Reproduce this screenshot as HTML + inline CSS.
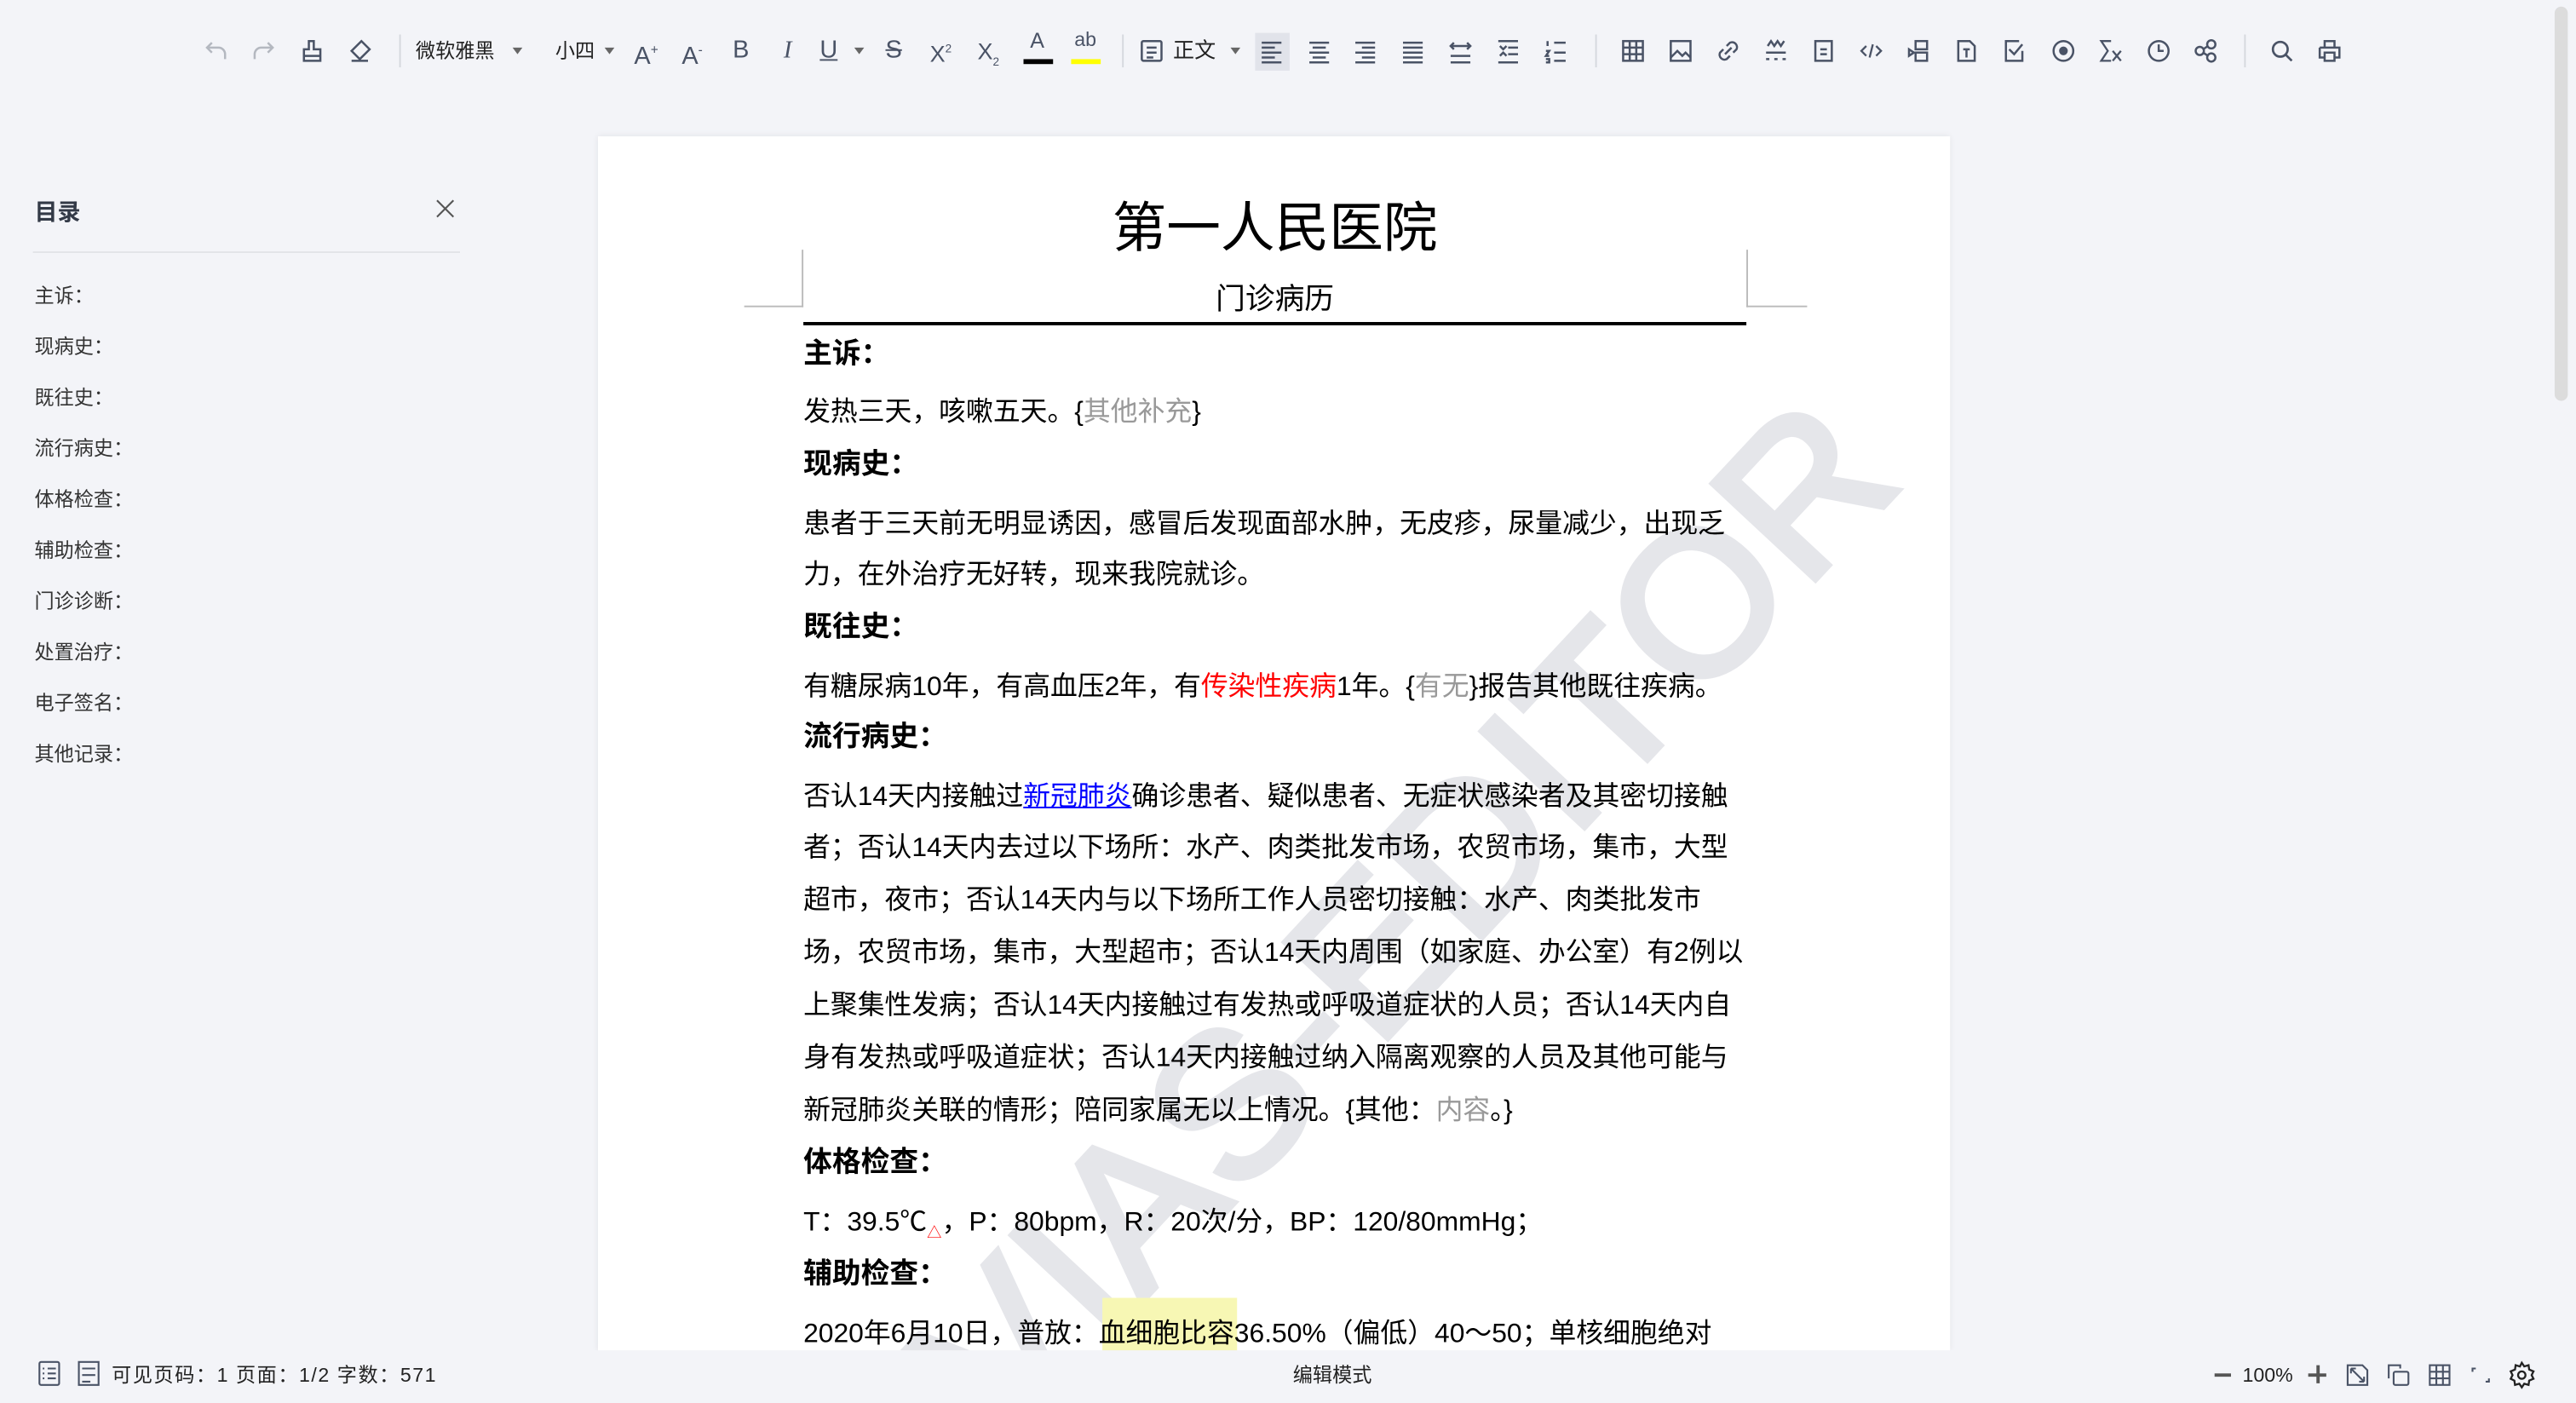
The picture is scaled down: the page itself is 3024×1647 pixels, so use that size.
<!DOCTYPE html>
<html><head><meta charset="utf-8">
<style>
html,body{margin:0;padding:0;width:3024px;height:1646px;overflow:hidden;background:#f3f4f8;}
#w{position:absolute;left:0;top:0;width:1568px;height:854px;transform:scale(1.928571);transform-origin:0 0;font-family:"Liberation Sans","Noto Sans CJK SC",sans-serif;color:#000;}
.a{position:absolute;white-space:nowrap;}
.ic{position:absolute;top:22px;width:18px;height:18px;}
.ic svg{width:18px;height:18px;display:block}
.sep{position:absolute;top:21px;width:1px;height:20px;background:#d5d8de;}
.tb{position:absolute;top:22px;font-size:12px;line-height:18px;color:#222;}
.dd{position:absolute;top:29px;width:0;height:0;border-left:3px solid transparent;border-right:3px solid transparent;border-top:4px solid #666;}
.toc{position:absolute;left:21px;font-size:12px;color:#333;line-height:16px;}
.p{position:absolute;left:489px;font-size:16.5px;line-height:24px;white-space:nowrap;}
.h{position:absolute;left:489px;font-size:17.5px;font-weight:bold;line-height:24px;white-space:nowrap;}
.g{color:#999}
</style></head><body><div id="w">
<div class="a" style="left:1555px;top:4px;width:8px;height:240px;border-radius:4px;background:#dcdcdc"></div>
<!-- toolbar -->
<div class="ic" style="left:123px"><svg viewBox="0 0 18 18" fill="none" stroke="#b4b8c0" stroke-width="1.3"><path d="M6 4L3 7l3 3M3 7h7a4 4 0 014 4v3"/></svg></div>
<div class="ic" style="left:151px"><svg viewBox="0 0 18 18" fill="none" stroke="#b4b8c0" stroke-width="1.3"><path d="M12 4l3 3-3 3M15 7H8a4 4 0 00-4 4v3"/></svg></div>
<div class="ic" style="left:181px"><svg viewBox="0 0 18 18" fill="none" stroke="#4a5366" stroke-width="1.3"><path d="M7 3v5H4v7h10V8H10V3zM4 12h10"/></svg></div>
<div class="ic" style="left:210px"><svg viewBox="0 0 18 18" fill="none" stroke="#4a5366" stroke-width="1.3"><path d="M10 3l5 5-6 6-5-5zM4 15h10"/></svg></div>
<div class="sep" style="left:243px"></div>
<div class="tb" style="left:253px">微软雅黑</div><div class="dd" style="left:312px"></div>
<div class="tb" style="left:338px">小四</div><div class="dd" style="left:368px"></div>
<div class="tb" style="left:386px;font-size:15px;color:#4a5366">A<sup style="font-size:8px">+</sup></div>
<div class="tb" style="left:415px;font-size:15px;color:#4a5366">A<sup style="font-size:8px">-</sup></div>
<div class="tb" style="left:446px;font-size:15px;color:#4a5366">B</div>
<div class="tb" style="left:477px;font-size:15px;color:#4a5366;font-style:italic;font-family:'Liberation Serif'">I</div>
<div class="tb" style="left:499px;font-size:15px;color:#4a5366;text-decoration:underline">U</div><div class="dd" style="left:520px"></div>
<div class="tb" style="left:539px;font-size:15px;color:#4a5366;text-decoration:line-through">S</div>
<div class="tb" style="left:566px;font-size:14px;color:#4a5366">X<sup style="font-size:7px">2</sup></div>
<div class="tb" style="left:595px;font-size:14px;color:#4a5366">X<sub style="font-size:7px">2</sub></div>
<div class="tb" style="left:627px;top:16px;font-size:13px;color:#4a5366">A</div><div class="a" style="left:623px;top:36px;width:18px;height:3px;background:#000"></div>
<div class="tb" style="left:654px;top:15px;font-size:12px;color:#4a5366">ab</div><div class="a" style="left:652px;top:36px;width:18px;height:3px;background:#ff0"></div>
<div class="sep" style="left:683px"></div>
<div class="ic" style="left:692px"><svg viewBox="0 0 18 18" fill="none" stroke="#4a5366" stroke-width="1.3"><rect x="3" y="3" width="12" height="12" rx="1"/><path d="M6 7h6M6 10h6M6 13h4"/></svg></div>
<div class="tb" style="left:714px;font-size:13px">正文</div><div class="dd" style="left:749px"></div>
<div class="a" style="left:764px;top:20px;width:21px;height:23px;background:#e1e3ea"></div>
<div class="ic" style="left:765px"><svg viewBox="0 0 18 18" stroke="#4a5366" stroke-width="1.3"><path d="M3 4h12M3 7h8M3 10h12M3 13h8M3 16h12"/></svg></div>
<div class="ic" style="left:794px"><svg viewBox="0 0 18 18" stroke="#4a5366" stroke-width="1.3"><path d="M3 4h12M5 7h8M3 10h12M5 13h8M3 16h12"/></svg></div>
<div class="ic" style="left:822px"><svg viewBox="0 0 18 18" stroke="#4a5366" stroke-width="1.3"><path d="M3 4h12M7 7h8M3 10h12M7 13h8M3 16h12"/></svg></div>
<div class="ic" style="left:851px"><svg viewBox="0 0 18 18" stroke="#4a5366" stroke-width="1.3"><path d="M3 4h12M3 7h12M3 10h12M3 13h12M3 16h12"/></svg></div>
<div class="ic" style="left:880px"><svg viewBox="0 0 18 18" fill="none" stroke="#4a5366" stroke-width="1.3"><path d="M3 6h12M5 4L3 6l2 2M13 4l2 2-2 2M3 12h12M3 16h12"/></svg></div>
<div class="ic" style="left:909px"><svg viewBox="0 0 18 18" fill="none" stroke="#4a5366" stroke-width="1.3"><path d="M3 3h12M9 7h6M9 11h6M3 16h12M4 6l2 2 2-2M4 12l2-2 2 2"/></svg></div>
<div class="ic" style="left:938px"><svg viewBox="0 0 18 18" fill="none" stroke="#4a5366" stroke-width="1.3"><path d="M8 4h7M8 10h7M8 15h7M4 3v3M3 9h2l-2 3h2M3 14h2v2H3"/></svg></div>
<div class="sep" style="left:971px"></div>
<div class="ic" style="left:985px"><svg viewBox="0 0 18 18" fill="none" stroke="#4a5366" stroke-width="1.3"><rect x="3" y="3" width="12" height="12"/><path d="M3 7h12M3 11h12M7 3v12M11 3v12"/></svg></div>
<div class="ic" style="left:1014px"><svg viewBox="0 0 18 18" fill="none" stroke="#4a5366" stroke-width="1.3"><rect x="3" y="3" width="12" height="12"/><path d="M3 13l4-4 3 3 2-2 3 3"/></svg></div>
<div class="ic" style="left:1043px"><svg viewBox="0 0 18 18" fill="none" stroke="#4a5366" stroke-width="1.3"><path d="M8 6l2-2a3 3 0 014 4l-2 2M10 12l-2 2a3 3 0 01-4-4l2-2M7 11l4-4"/></svg></div>
<div class="ic" style="left:1072px"><svg viewBox="0 0 18 18" fill="none" stroke="#4a5366" stroke-width="1.3"><path d="M4 6l2-3 2 3 2-3 2 3 2-3M3 10h12M3 14h2M8 14h2M13 14h2"/></svg></div>
<div class="ic" style="left:1101px"><svg viewBox="0 0 18 18" fill="none" stroke="#4a5366" stroke-width="1.3"><rect x="4" y="3" width="10" height="12"/><path d="M7 8h4M7 11h4"/></svg></div>
<div class="ic" style="left:1130px"><svg viewBox="0 0 18 18" fill="none" stroke="#4a5366" stroke-width="1.2"><path d="M6 6L3 9l3 3M12 6l3 3-3 3M10 5l-2 8"/></svg></div>
<div class="ic" style="left:1159px"><svg viewBox="0 0 18 18" fill="none" stroke="#4a5366" stroke-width="1.3"><rect x="7" y="3" width="7" height="5"/><rect x="7" y="10" width="7" height="5"/><path d="M3 8l3 2-3 2z"/></svg></div>
<div class="ic" style="left:1188px"><svg viewBox="0 0 18 18" fill="none" stroke="#4a5366" stroke-width="1.3"><path d="M4 3h7l3 3v9H4zM7 8h4M9 8v5"/></svg></div>
<div class="ic" style="left:1217px"><svg viewBox="0 0 18 18" fill="none" stroke="#4a5366" stroke-width="1.3"><path d="M14 9v6H4V3h8M6 8l3 3 5-6"/></svg></div>
<div class="ic" style="left:1247px"><svg viewBox="0 0 18 18" fill="none" stroke="#4a5366" stroke-width="1.3"><circle cx="9" cy="9" r="6"/><circle cx="9" cy="9" r="2" fill="#4a5366"/></svg></div>
<div class="ic" style="left:1276px"><svg viewBox="0 0 18 18" fill="none" stroke="#4a5366" stroke-width="1.2"><path d="M9 3H3l4 6-4 6h6M10 9l5 6M15 9l-5 6"/></svg></div>
<div class="ic" style="left:1305px"><svg viewBox="0 0 18 18" fill="none" stroke="#4a5366" stroke-width="1.3"><circle cx="9" cy="9" r="6"/><path d="M9 5v4h3"/></svg></div>
<div class="ic" style="left:1334px"><svg viewBox="0 0 18 18" fill="none" stroke="#4a5366" stroke-width="1.3"><circle cx="12" cy="5" r="2.5"/><circle cx="5" cy="9" r="2.5"/><circle cx="12" cy="13" r="2.5"/><path d="M7 8l3-2M7 10l3 2"/></svg></div>
<div class="sep" style="left:1366px"></div>
<div class="ic" style="left:1380px"><svg viewBox="0 0 18 18" fill="none" stroke="#4a5366" stroke-width="1.4"><circle cx="8" cy="8" r="4.5"/><path d="M11 11l4 4"/></svg></div>
<div class="ic" style="left:1409px"><svg viewBox="0 0 18 18" fill="none" stroke="#4a5366" stroke-width="1.3"><path d="M6 7V3h6v4M3 7h12v6h-3M6 13H3V7M6 10h6v5H6z"/></svg></div>
<!-- sidebar -->
<div class="a" style="left:21px;top:119px;font-size:14px;font-weight:bold;color:#333a47">目录</div>
<div class="a" style="left:265px;top:120px"><svg width="12" height="12" viewBox="0 0 12 12" stroke="#555" stroke-width="1.1"><path d="M1 1l10 10M11 1L1 11"/></svg></div>
<div class="a" style="left:20px;top:153px;width:260px;height:1px;background:#e2e4e8"></div>
<div class="toc" style="top:172px">主诉：</div>
<div class="toc" style="top:203px">现病史：</div>
<div class="toc" style="top:234px">既往史：</div>
<div class="toc" style="top:265px">流行病史：</div>
<div class="toc" style="top:296px">体格检查：</div>
<div class="toc" style="top:327px">辅助检查：</div>
<div class="toc" style="top:358px">门诊诊断：</div>
<div class="toc" style="top:389px">处置治疗：</div>
<div class="toc" style="top:420px">电子签名：</div>
<div class="toc" style="top:451px">其他记录：</div>
<!-- page -->
<div class="a" style="left:364px;top:83px;width:823px;height:739px;background:#fff;box-shadow:0 0 4px rgba(0,0,0,.08);overflow:hidden">
  <div class="a" style="left:492px;top:475px;width:0;height:0">
    <div class="a" style="left:0;top:0;transform:translate(-50%,-50%) rotate(-47deg);font-size:124px;line-height:124px;color:#e5e6ea;font-family:'Liberation Sans',sans-serif;letter-spacing:1px;-webkit-text-stroke:4px #e5e6ea">VIAS-EDITOR</div>
  </div>
</div>
<div class="a" style="left:488px;top:152px;width:1px;height:35px;background:#bbb"></div>
<div class="a" style="left:453px;top:186px;width:36px;height:1px;background:#bbb"></div>
<div class="a" style="left:1063px;top:152px;width:1px;height:35px;background:#bbb"></div>
<div class="a" style="left:1063px;top:186px;width:37px;height:1px;background:#bbb"></div>
<div class="a" style="left:576px;top:117px;width:400px;text-align:center;font-size:33px;line-height:44px">第一人民医院</div>
<div class="a" style="left:676px;top:171px;width:200px;text-align:center;font-size:18px;line-height:22px">门诊病历</div>
<div class="a" style="left:489px;top:196px;width:574px;height:1.5px;background:#000"></div>
<div class="h" style="top:203px">主诉：</div>
<div class="p" style="top:239px">发热三天，咳嗽五天。{<span class="g">其他补充</span>}</div>
<div class="h" style="top:270px">现病史：</div>
<div class="p" style="top:307px">患者于三天前无明显诱因，感冒后发现面部水肿，无皮疹，尿量减少，出现乏</div>
<div class="p" style="top:338px">力，在外治疗无好转，现来我院就诊。</div>
<div class="h" style="top:369px">既往史：</div>
<div class="p" style="top:406px">有糖尿病10年，有高血压2年，有<span style="color:#f00">传染性疾病</span>1年。{<span class="g">有无</span>}报告其他既往疾病。</div>
<div class="h" style="top:436px">流行病史：</div>
<div class="p" style="top:473px">否认14天内接触过<span style="color:#00f;text-decoration:underline">新冠肺炎</span>确诊患者、疑似患者、无症状感染者及其密切接触</div>
<div class="p" style="top:504px">者；否认14天内去过以下场所：水产、肉类批发市场，农贸市场，集市，大型</div>
<div class="p" style="top:536px">超市，夜市；否认14天内与以下场所工作人员密切接触：水产、肉类批发市</div>
<div class="p" style="top:568px">场，农贸市场，集市，大型超市；否认14天内周围（如家庭、办公室）有2例以</div>
<div class="p" style="top:600px">上聚集性发病；否认14天内接触过有发热或呼吸道症状的人员；否认14天内自</div>
<div class="p" style="top:632px">身有发热或呼吸道症状；否认14天内接触过纳入隔离观察的人员及其他可能与</div>
<div class="p" style="top:664px">新冠肺炎关联的情形；陪同家属无以上情况。{其他：<span class="g">内容</span>。}</div>
<div class="h" style="top:695px">体格检查：</div>
<div class="p" style="top:732px">T：39.5℃<sub style="color:#f00;font-size:9px">△</sub>，P：80bpm，R：20次/分，BP：120/80mmHg；</div>
<div class="h" style="top:763px">辅助检查：</div>
<div class="a" style="left:671px;top:790px;width:82px;height:32px;background:#f7f7b4"></div>
<div class="p" style="top:800px">2020年6月10日，普放：血细胞比容36.50%（偏低）40～50；单核细胞绝对</div>
<!-- status bar -->
<div class="a" style="left:0;top:822px;width:1568px;height:32px;background:#f3f4f8"></div>
<div class="a" style="left:23px;top:828px"><svg width="14" height="16" viewBox="0 0 14 16" fill="none" stroke="#4a5366" stroke-width="1.1"><rect x="1" y="1" width="12" height="14" rx="1"/><path d="M3 5h1M6 5h5M3 8h1M6 8h5M3 11h1M6 11h5"/></svg></div>
<div class="a" style="left:47px;top:828px"><svg width="14" height="16" viewBox="0 0 14 16" fill="none" stroke="#4a5366" stroke-width="1.1"><path d="M1 1h12v14H1zM3 5h8M3 9h8M3 13h5"/></svg></div>
<div class="a" style="left:68px;top:829px;font-size:12px;line-height:16px;color:#222;letter-spacing:.8px">可见页码：1 页面：1/2 字数：571</div>
<div class="a" style="left:787px;top:829px;font-size:12px;line-height:16px;color:#222">编辑模式</div>
<div class="a" style="left:1348px;top:836px;width:10px;height:2px;background:#555"></div>
<div class="a" style="left:1365px;top:829px;font-size:12px;line-height:16px;color:#222">100%</div>
<div class="a" style="left:1405px;top:836px;width:11px;height:2px;background:#555"></div>
<div class="a" style="left:1409.5px;top:831px;width:2px;height:11px;background:#555"></div>
<div class="a" style="left:1428px;top:830px"><svg width="14" height="14" viewBox="0 0 14 14" fill="none" stroke="#4a5366" stroke-width="1.1"><path d="M1 1h9l3 3v9H1zM3 3l8 8M3 3v3M3 3h3M11 11H8M11 11V8"/></svg></div>
<div class="a" style="left:1453px;top:830px"><svg width="14" height="14" viewBox="0 0 14 14" fill="none" stroke="#4a5366" stroke-width="1.1"><path d="M1 9V1h7v2"/><rect x="4" y="5" width="9" height="8" rx="1"/></svg></div>
<div class="a" style="left:1478px;top:830px"><svg width="14" height="14" viewBox="0 0 14 14" fill="none" stroke="#4a5366" stroke-width="1.1"><rect x="1" y="1" width="12" height="12"/><path d="M1 5h12M1 9h12M5 1v12M9 1v12"/></svg></div>
<div class="a" style="left:1503px;top:830px"><svg width="14" height="14" viewBox="0 0 14 14" fill="none" stroke="#4a5366" stroke-width="1.1"><path d="M2 5V3h2M12 9v2h-2"/></svg></div>
<div class="a" style="left:1526px;top:828px"><svg width="18" height="18" viewBox="0 0 24 24" fill="none" stroke="#222" stroke-width="1.6"><circle cx="12" cy="12" r="3"/><path d="M12 2l2 3 3.5-1 .5 3.5 3.5 1.5-1.5 3 1.5 3-3.5 1.5-.5 3.5-3.5-1-2 3-2-3-3.5 1-.5-3.5L3 15l1.5-3L3 9l3.5-1.5L7 4l3.5 1z"/></svg></div>
</div></body></html>
